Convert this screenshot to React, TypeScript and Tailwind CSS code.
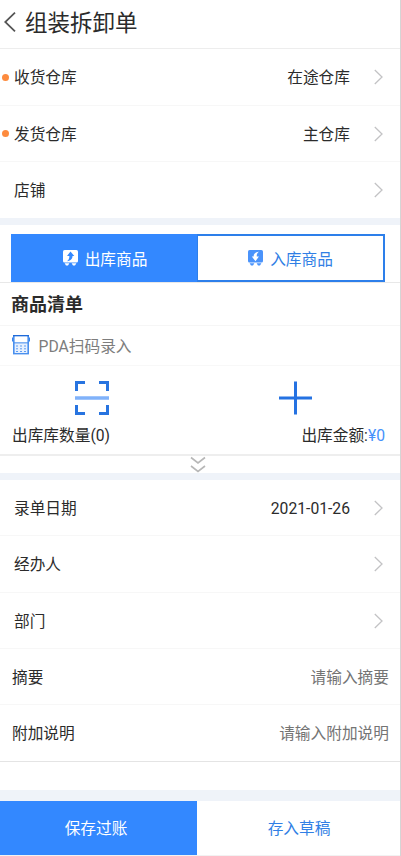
import React from "react";

function Chevron() {
  return (
    <svg className="h-4 w-[9px] shrink-0" viewBox="0 0 9 16" fill="none" stroke="#c3c3c5" strokeWidth="1.3">
      <path d="M0.8 1L8 8L0.8 15" />
    </svg>
  );
}

type RowProps = {
  label: string;
  value?: string;
  required?: boolean;
  size: string;
};

function SelectRow({ label, value, required, size }: RowProps) {
  return (
    <div className={`flex shrink-0 items-center pr-[17px] ${size}`}>
      <div className="flex w-[14px] shrink-0 pl-[2px]">
        {required && <span className="h-[7px] w-[7px] rounded-full bg-[#fd8b3e]" />}
      </div>
      <span className="pt-[2px]">{label}</span>
      <span className="mr-6 ml-auto pt-[2px]">{value}</span>
      <Chevron />
    </div>
  );
}

function InputRow({ label, hint, size }: { label: string; hint: string; size: string }) {
  return (
    <div className={`flex shrink-0 items-center justify-between pt-[2px] pr-[11px] pl-3 ${size}`}>
      <span>{label}</span>
      <span className="text-[#747474]">{hint}</span>
    </div>
  );
}

function CartIcon({ inbound }: { inbound?: boolean }) {
  const arrow = inbound ? "#ffffff" : "#3388ff";
  const body = inbound ? "#4a93fb" : "#ffffff";
  return (
    <svg className="h-4 w-[15px] shrink-0" viewBox="0 0 15 16">
      <rect width="15" height="12.5" rx="1.6" fill={body} />
      <path d="M1.6 13.3h4.8l-1.4 2.3h-2zM8.6 13.3h4.8l-1.4 2.3h-2z" fill={body} />
      {inbound ? (
        <path d="M11 1.7C8 1.9 5.6 3.4 5.6 6.5H3.8l3.7 4.7 3.4-4.7H8.8C8.5 4.6 9.2 3 11 1.7z" fill={arrow} />
      ) : (
        <path d="M4 11.2c3-.2 5.5-1.8 5.5-5.2h1.8L7.5 1.5 4 6h2.3c.2 2-.5 3.9-2.3 5.2z" fill={arrow} />
      )}
    </svg>
  );
}

function PdaIcon() {
  return (
    <svg className="-mt-px h-5 w-[18px] shrink-0" viewBox="0 0 18 20">
      <rect x="1" y="0" width="16" height="19.4" fill="#4a90ee" />
      <path d="M0 2.5h1v4H0zM17 2.5h1v4h-1z" fill="#3a84ea" />
      <rect x="1" y="0" width="16" height="1.4" fill="#1f6ad8" />
      <rect x="2.6" y="1.4" width="12.8" height="5.9" fill="#fff" />
      <rect x="2.6" y="8.4" width="12.8" height="9.6" fill="#e6f0fe" />
      <path
        d="M4 11h2M8 11h2M12 11h2M4 13.8h2M8 13.8h2M12 13.8h2M4 16.5h2M8 16.5h2M12 16.5h2"
        stroke="#5e9df3"
        strokeWidth="1"
      />
    </svg>
  );
}

export default function App() {
  return (
    <div className="flex h-[856px] w-[401px] flex-col overflow-hidden border-r border-[#d5d5d5] bg-white font-['Roboto','Noto_Sans_CJK_SC',sans-serif] text-[15.7px] leading-6 text-[#2b2b2b]">
      <header className="flex h-[49px] shrink-0 items-center border-b border-[#ededed] pb-[3px] pl-1">
        <svg className="-mt-[2px] h-5 w-3 shrink-0" viewBox="0 0 12 20" fill="none" stroke="#555555" strokeWidth="1.8">
          <path d="M11 0.7L1.2 10L11 19.3" />
        </svg>
        <h1 className="ml-[9px] text-[22.5px]">组装拆卸单</h1>
      </header>

      <SelectRow label="收货仓库" value="在途仓库" required size="h-[57px] border-b border-[#f7f7f7]" />
      <SelectRow label="发货仓库" value="主仓库" required size="h-14 border-b border-[#f7f7f7]" />
      <SelectRow label="店铺" size="h-14" />
      <div className="h-[7px] shrink-0 bg-[#eff3f9]" />

      <div className="flex h-[58px] shrink-0 border-b border-[#e8e8e8] pt-[9px] pr-[15px] pl-[11px]">
        <div className="flex h-12 flex-1 items-center justify-center gap-[7px] bg-[#3388ff] pl-[2px] text-white">
          <CartIcon />
          <span className="pt-[3px]">出库商品</span>
        </div>
        <div className="flex h-12 w-[188px] items-center justify-center gap-[7px] border-2 border-l border-[#2d7fea] bg-white text-[#317fe5]">
          <CartIcon inbound />
          <span className="pt-[3px]">入库商品</span>
        </div>
      </div>

      <h2 className="flex h-[43px] shrink-0 items-center border-b border-[#f6f6f6] pt-[2px] pl-[11px] text-[18px] font-bold">
        商品清单
      </h2>
      <div className="flex h-10 shrink-0 items-center border-b border-[#f8f8f8] pl-3 text-[#7d7d7d]">
        <PdaIcon />
        <span className="ml-[8.5px] pt-[2px]">PDA扫码录入</span>
      </div>

      <div className="flex h-[90px] shrink-0 flex-col border-b-2 border-[#eeeeee]">
        <div className="flex h-[58px] shrink-0 items-start pt-[15px] pl-[75px]">
          <svg className="h-[34px] w-[34px]" viewBox="0 0 34 34" fill="none" stroke="#2874e0" strokeWidth="3">
            <path d="M1.5 10V1.5H10M24 1.5h8.5V10M1.5 24v8.5H10M24 32.5h8.5V24" />
            <path d="M0 17h34" stroke="#80b2fa" strokeWidth="3.6" />
          </svg>
          <svg className="ml-[170px] h-[34px] w-[33px]" viewBox="0 0 33 34" stroke="#2572e2" strokeWidth="3">
            <path d="M0 17h33M16.5 0.5v33" />
          </svg>
        </div>
        <div className="flex items-center justify-between pr-[15px] pl-3">
          <span>出库库数量(0)</span>
          <span>
            出库金额:<span className="text-[#4692fb]">¥0</span>
          </span>
        </div>
      </div>

      <div className="flex h-[17px] shrink-0 items-center justify-center pr-1">
        <svg className="h-[17px] w-4" viewBox="0 0 16 17" fill="none" stroke="#b7b7b7" strokeWidth="1.6">
          <path d="M1 1.5L8 7L15 1.5M1 10L8 15.5L15 10" />
        </svg>
      </div>
      <div className="h-[7px] shrink-0 bg-[#eff3f9]" />

      <SelectRow label="录单日期" value="2021-01-26" size="h-14 border-b border-[#f7f7f7]" />
      <SelectRow label="经办人" size="h-[57px] border-b border-[#f7f7f7]" />
      <SelectRow label="部门" size="h-14 border-b border-[#f7f7f7]" />
      <InputRow label="摘要" hint="请输入摘要" size="h-14 border-b border-[#f7f7f7]" />
      <InputRow label="附加说明" hint="请输入附加说明" size="h-[57px] border-b border-[#e4e4e4]" />

      <div className="h-7 shrink-0" />
      <div className="h-[11px] shrink-0 bg-[#eff3f9]" />
      <footer className="flex h-[55px] shrink-0 border-b border-[#f2f2f2]">
        <button className="w-[197px] bg-[#3388ff] pt-[2px] pr-[5px] text-white">保存过账</button>
        <button className="flex-1 bg-white pt-[2px] pl-px text-[#317fe5]">存入草稿</button>
      </footer>
    </div>
  );
}
